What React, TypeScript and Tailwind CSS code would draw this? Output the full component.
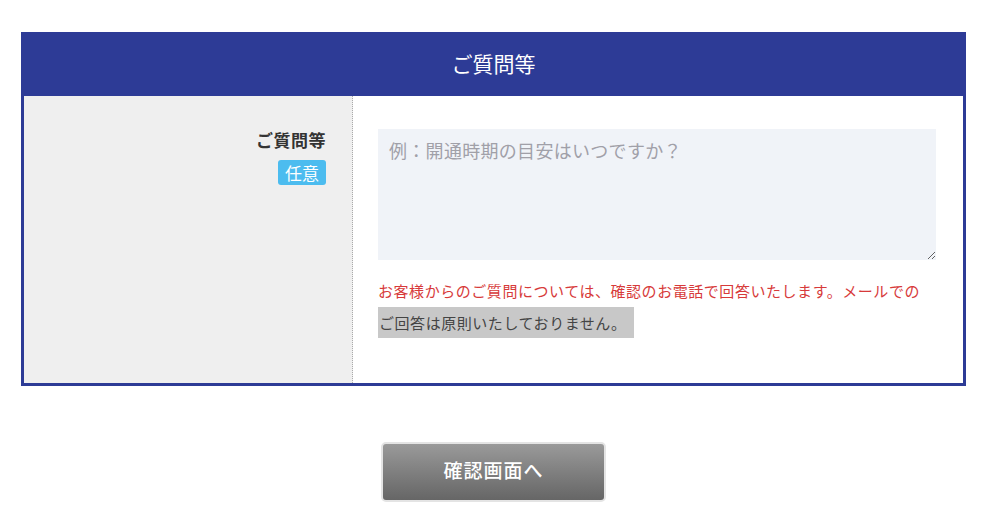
export default function App() {
  return (
    <div className="min-h-screen bg-white pt-[32px] font-['Noto_Sans_CJK_JP','Noto_Sans',sans-serif] text-[#333]">
      {/* Form table */}
      <div className="ml-[21px] w-[945px]">
        <div className="flex h-[64px] items-center justify-center bg-[#2d3b96] text-[21px] text-white">
          ご質問等
        </div>
        <div className="flex border-x-[3px] border-b-[3px] border-[#2d3b96]">
          <div className="flex w-[329px] shrink-0 flex-col items-end gap-[8px] border-r border-dotted border-[#aaa] bg-[#efefef] pr-[26px] pt-[32px]">
            <span className="text-[17px] font-bold leading-[24px] tracking-[0.5px]">ご質問等</span>
            <span className="rounded-[3px] bg-[#4cbcef] px-[7px] text-[17px] leading-[25px] text-white">任意</span>
          </div>
          <div className="flex-1 pl-[25px] pr-[27px] pt-[33px] pb-[44px]">
            <textarea
              placeholder="例：開通時期の目安はいつですか？"
              className="block h-[131px] w-[558px] resize-y bg-[#f0f3f8] px-[11px] py-[8px] text-[18px] leading-[26px] tracking-[0.3px] placeholder:text-[#a0a0a8] focus:outline-none"
            />
            <p className="mt-[15px] text-[15px] leading-[32px] tracking-[0.55px] text-[#d73a3a]">
              お客様からのご質問については、確認のお電話で回答いたします。メールでの
              <br />
              <span className="inline-block bg-[#c8c8c8] pl-[1px] pr-[8px] align-top leading-[31px] text-[#444]">ご回答は原則いたしておりません。</span>
            </p>
          </div>
        </div>
      </div>

      {/* Submit */}
      <div className="mt-[56px] flex justify-center">
        <button className="ml-[4px] flex h-[60px] w-[225px] items-center justify-center rounded-[5px] border-2 border-[#e4e4e4] bg-gradient-to-b from-[#9a9a9a] to-[#666] pb-[4px] text-[19px] font-medium tracking-[1px] text-white">
          確認画面へ
        </button>
      </div>
    </div>
  );
}
